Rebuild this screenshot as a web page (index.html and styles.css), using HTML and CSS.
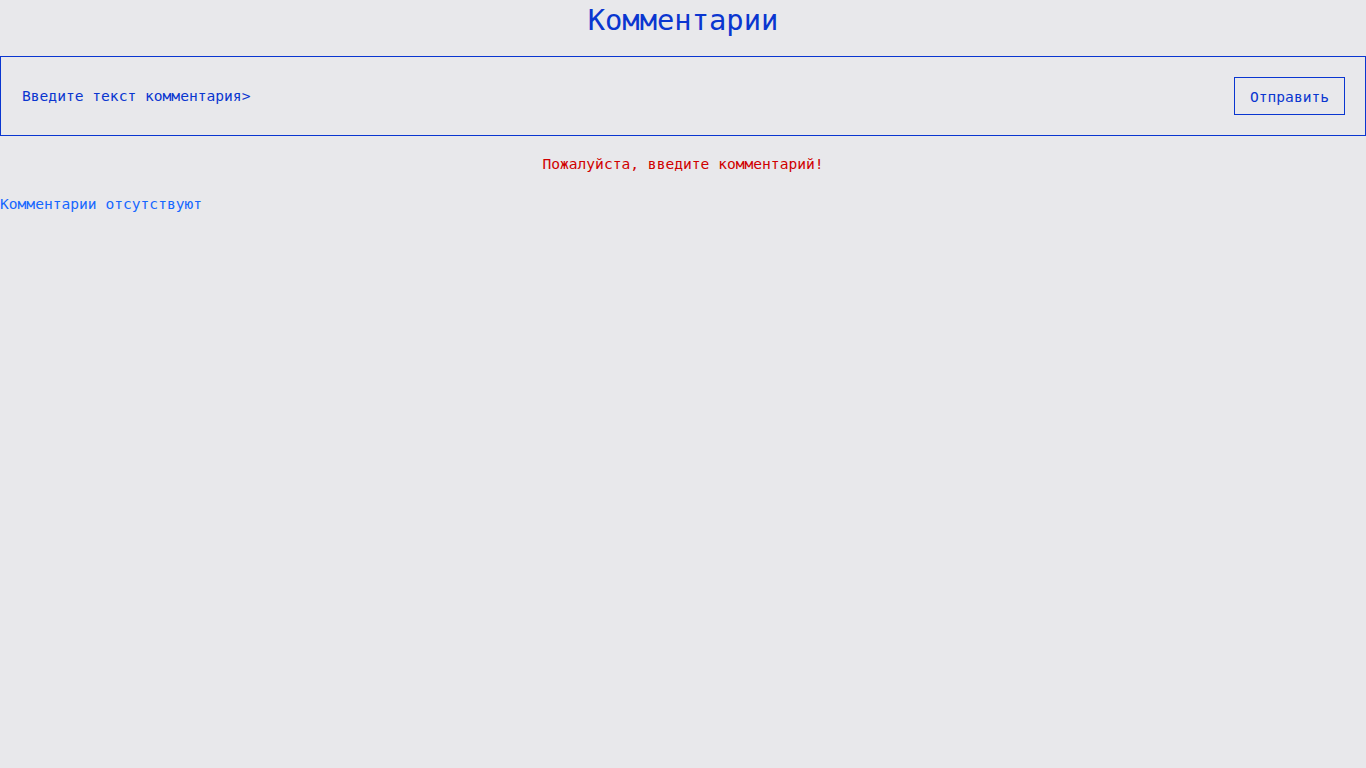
FILE: index.html
```html
<!DOCTYPE html>
<html lang="ru">
<head>
<meta charset="utf-8">
<title>Комментарии</title>
<link rel="stylesheet" href="styles.css">
</head>
<body>
<h1 class="title">Комментарии</h1>
<form class="comment-form">
  <input class="comment-input" type="text" placeholder="Введите текст комментария>">
  <button class="send-btn" type="button">Отправить</button>
</form>
<p class="error">Пожалуйста, введите комментарий!</p>
<p class="empty">Комментарии отсутствуют</p>
</body>
</html>
```
FILE: styles.css
```css
* { box-sizing: border-box; }
html, body { margin: 0; padding: 0; }
body {
  background: #e8e8eb;
  font-family: "DejaVu Sans Mono", monospace;
  font-size: 14.6px;
  color: #0a36d0;
}
.title {
  margin: 0;
  height: 56px;
  padding-top: 2px;
  font-size: 28.8px;
  font-weight: normal;
  text-align: center;
  line-height: 36px;
  color: #0a36d0;
}
.comment-form {
  display: flex;
  align-items: center;
  justify-content: space-between;
  height: 80px;
  padding: 0 20px;
  border: 1px solid #0a36d0;
}
.comment-input {
  flex: 1;
  border: none;
  background: transparent;
  font: inherit;
  padding: 0 1px 2px;
  outline: none;
  color: #0a36d0;
}
.comment-input::placeholder { color: #0a36d0; opacity: 1; }
.send-btn {
  height: 38px;
  width: 111px;
  border: 1px solid #0a36d0;
  background: transparent;
  font: inherit;
  color: #0a36d0;
  padding: 0;
}
.error {
  margin: 19px 0 0;
  line-height: 18px;
  text-align: center;
  color: #d00000;
}
.empty {
  margin: 22px 0 0;
  line-height: 18px;
  color: #1667ff;
}
```
